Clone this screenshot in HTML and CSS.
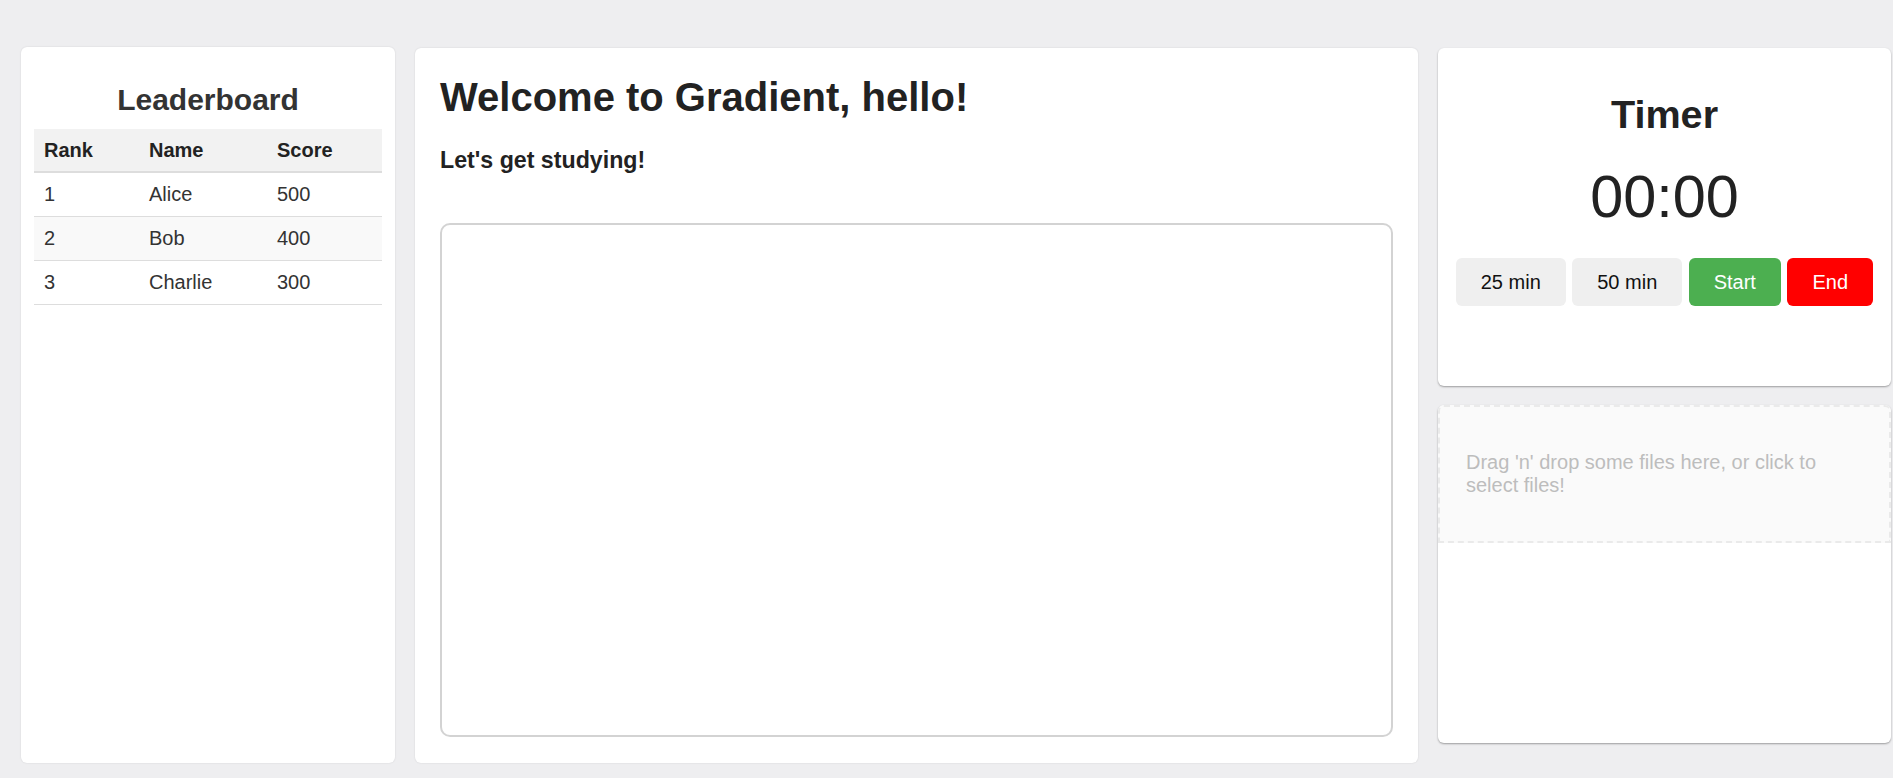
FILE: index.html
```html
<!DOCTYPE html>
<html>
<head>
<meta charset="utf-8">
<title>Gradient</title>
<link rel="stylesheet" href="styles.css">
</head>
<body>
<div class="page">
  <aside class="card leaderboard">
    <h2 class="lb-title">Leaderboard</h2>
    <table class="lb-table">
      <thead>
        <tr><th class="c-rank">Rank</th><th class="c-name">Name</th><th class="c-score">Score</th></tr>
      </thead>
      <tbody>
        <tr><td>1</td><td>Alice</td><td>500</td></tr>
        <tr><td>2</td><td>Bob</td><td>400</td></tr>
        <tr><td>3</td><td>Charlie</td><td>300</td></tr>
      </tbody>
    </table>
  </aside>

  <main class="card main">
    <h1 class="welcome">Welcome to Gradient, hello!</h1>
    <h3 class="subtitle">Let's get studying!</h3>
    <textarea class="notes"></textarea>
  </main>

  <section class="side">
    <div class="card-r timer">
      <h2 class="timer-title">Timer</h2>
      <div class="clock">00:00</div>
      <div class="btns">
        <button class="btn btn-gray">25 min</button>
        <button class="btn btn-gray">50 min</button>
        <button class="btn btn-green">Start</button>
        <button class="btn btn-red">End</button>
      </div>
    </div>
    <div class="card-r files">
      <div class="dropzone">Drag 'n' drop some files here, or click to select files!</div>
    </div>
  </section>
</div>
</body>
</html>
```

FILE: styles.css
```css
* { box-sizing: border-box; }
html, body { margin: 0; padding: 0; }
body {
  background: #eeeef0;
  font-family: "Liberation Sans", Arial, sans-serif;
  color: #222;
  overflow: hidden;
}
.page {
  display: flex;
  align-items: flex-start;
  padding: 47px 0 0 21px;
  height: 778px;
}
.card {
  background: #fff;
  border-radius: 6px;
  box-shadow: 0 0 2px rgba(0,0,0,0.12);
  height: 716px;
}
.leaderboard {
  width: 374px;
  padding: 0 13px;
}
.lb-title {
  margin: 36px 0 13px;
  font-size: 30px;
  line-height: 33px;
  text-align: center;
  color: #333;
  font-weight: bold;
}
.lb-table {
  width: 348px;
  border-collapse: collapse;
  font-size: 20px;
  color: #333;
}
.lb-table th, .lb-table td {
  text-align: left;
  padding: 0 0 0 10px;
  height: 44px;
  border-bottom: 1px solid #ddd;
}
.lb-table th {
  background: #f2f2f2;
  color: #222;
  font-weight: bold;
  height: 43px;
  border-bottom: 2px solid #ddd;
}
.lb-table tbody tr:nth-child(2) td { background: #f9f9f9; }
.c-rank { width: 105px; }
.c-name { width: 128px; }
.c-score { width: 115px; }

.main {
  width: 1003px;
  margin-left: 20px;
  margin-top: 1px;
  height: 715px;
  padding: 26px 25px 26px 25px;
  display: flex;
  flex-direction: column;
}
.welcome {
  margin: 0;
  font-size: 40px;
  line-height: 46px;
  font-weight: bold;
  color: #222;
}
.subtitle {
  margin: 28px 0 0;
  font-size: 23.2px;
  line-height: 25px;
  font-weight: bold;
  color: #222;
}
.notes {
  display: block;
  margin: 50px 0 0 0;
  flex: 1;
  width: auto;
  border: 2px solid #d3d3d3;
  border-radius: 10px;
  resize: none;
  background: #fff;
  outline: none;
}

.side {
  width: 453px;
  margin-left: 20px;
  margin-top: 1px;
  display: flex;
  flex-direction: column;
  gap: 19px;
}
.card-r {
  background: #fff;
  border-radius: 6px;
  box-shadow: 0 1px 2px rgba(0,0,0,0.35);
}
.timer {
  height: 338px;
  padding-top: 44px;
  text-align: center;
}
.timer-title {
  margin: 0;
  font-size: 39.6px;
  line-height: 44px;
  font-weight: bold;
  color: #222;
}
.clock {
  margin-top: 28px;
  font-size: 59.4px;
  line-height: 66px;
  color: #222;
}
.btns {
  margin-top: 28px;
  display: flex;
  justify-content: center;
  gap: 6.5px;
}
.btn {
  font-family: "Liberation Sans", Arial, sans-serif;
  font-size: 20px;
  line-height: 22px;
  height: 48px;
  padding: 0;
  border: none;
  border-radius: 6px;
  cursor: pointer;
}
.btn-gray { background: #efefef; color: #111; width: 110px; }
.btn-green { background: #4caf50; color: #fff; width: 92px; }
.btn-red { background: #ff0000; color: #fff; width: 86px; }

.files {
  height: 338px;
  overflow: hidden;
}
.dropzone {
  height: 138px;
  padding: 44px 40px 44px 26px;
  background: #fafafa;
  border: 2px dashed #eaeaea;
  border-radius: 6px 6px 0 0;
  color: #bdbdbd;
  font-size: 20px;
  line-height: 22.5px;
}
```
